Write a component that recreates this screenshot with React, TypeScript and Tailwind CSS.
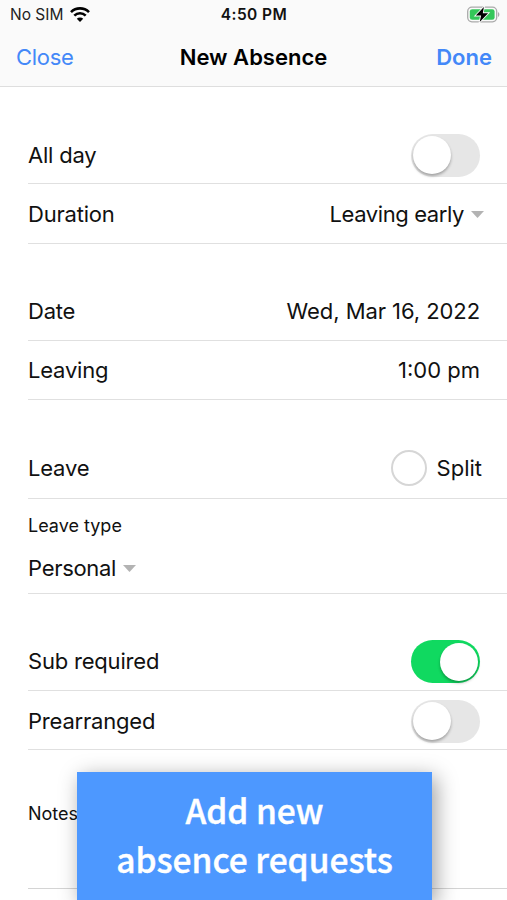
import type { ReactNode } from 'react';
import clsx from 'clsx';

interface RowProps {
  label: string;
  className?: string;
  children?: ReactNode;
}

function Row({ label, className, children }: RowProps) {
  return (
    <div className={clsx('flex items-center justify-between border-b border-[#e0e0e0]', className ?? 'h-[59.3px] pt-[2px]')}>
      <span className="tracking-[-0.2px]">{label}</span>
      {children}
    </div>
  );
}

function Toggle({ on = false }: { on?: boolean }) {
  return (
    <div
      className={clsx(
        'mr-[27px] flex h-[43px] w-[69px] items-center rounded-full px-[2px]',
        on ? 'justify-end bg-[#10d960]' : 'justify-start bg-[#e6e6e6]',
      )}
    >
      <div className="size-[38px] rounded-full bg-white shadow-[0_2px_3px_rgba(0,0,0,0.3)]" />
    </div>
  );
}

function Caret() {
  return (
    <svg width="13" height="7" viewBox="0 0 13 7" fill="#b3b3b3">
      <path d="M0 0h13L6.5 7z" />
    </svg>
  );
}

function WifiIcon() {
  return (
    <svg width="20" height="15" viewBox="0 0 20 15" fill="none" stroke="#000" strokeWidth="2.6" className="-mt-px">
      <path d="M1 5.1a12.8 12.8 0 0 1 18 0" />
      <path d="M4.3 8.6a8.1 8.1 0 0 1 11.4 0" />
      <path d="M10 15 6.8 11.8a4.6 4.6 0 0 1 6.4 0z" fill="#000" stroke="none" />
    </svg>
  );
}

function BatteryIcon() {
  return (
    <svg width="33" height="17" viewBox="0 0 33 17" className="-mt-[2px]">
      <rect x="0.7" y="1.2" width="29" height="14.6" rx="4.2" fill="none" stroke="#aaa" strokeWidth="1.3" />
      <rect x="2.8" y="3.2" width="24.8" height="10.6" rx="2.4" fill="#34c759" />
      <path d="M31 6v5c1.8-.8 1.8-4.2 0-5z" fill="#aaa" />
      <path d="M16.9 1 8.8 9.6h5.3L12.7 16l8.4-8.8h-5.3z" fill="#000" stroke="#fafafa" strokeWidth="1.8" paintOrder="stroke" />
    </svg>
  );
}

function Header() {
  return (
    <header className="h-[87px] border-b border-[#dedede] bg-[#fafafa]">
      <div className="grid h-[30px] grid-cols-3 items-center pr-[7px] pl-[10px] text-[15.5px]">
        <div className="flex items-center gap-[7px] text-[#222]">
          <span className="whitespace-nowrap">No SIM</span>
          <WifiIcon />
        </div>
        <span className="-ml-[2px] text-center font-semibold tracking-[0.4px] text-[#111]">4:50 PM</span>
        <div className="flex justify-end">
          <BatteryIcon />
        </div>
      </div>
      <div className="grid h-[55px] grid-cols-[100px_1fr_100px] items-center px-4 text-[22px]">
        <button className="text-left tracking-[-0.3px] text-[#4388f8]">Close</button>
        <h1 className="text-center font-semibold text-black">New Absence</h1>
        <button className="-mr-px text-right font-semibold text-[#4388f8]">Done</button>
      </div>
    </header>
  );
}

export default function App() {
  return (
    <div className="relative h-[900px] w-[507px] overflow-hidden bg-white font-['Inter',sans-serif] text-[22px] text-[#111]">
      <Header />

      <main className="pl-7">
        <section className="pt-[38px]">
          <Row label="All day">
            <Toggle />
          </Row>
          <Row label="Duration">
            <div className="mr-[23px] flex items-center gap-[7px]">
              <span className="tracking-[-0.4px]">Leaving early</span>
              <Caret />
            </div>
          </Row>
        </section>

        <section className="pt-[38px]">
          <Row label="Date">
            <span className="mr-[27px] tracking-[-0.07px]">Wed, Mar 16, 2022</span>
          </Row>
          <Row label="Leaving" className="h-[59.3px]">
            <span className="mr-[27px]">1:00 pm</span>
          </Row>
        </section>

        <section className="pt-[38px]">
          <Row label="Leave" className="h-[61px]">
            <div className="mr-6 flex items-center gap-[10px]">
              <span className="size-9 rounded-full border-2 border-[#d6d6d6]" />
              <span className="mr-px">Split</span>
            </div>
          </Row>
          <div className="flex h-[95px] flex-col border-b border-[#e0e0e0] pt-[13px]">
            <span className="text-[18px] leading-[27px]">Leave type</span>
            <div className="mt-[13px] flex items-center gap-[7px] leading-[32px]">
              <span className="tracking-[-0.3px]">Personal</span>
              <Caret />
            </div>
          </div>
        </section>

        <section className="pt-[38px]">
          <Row label="Sub required" className="h-[59.3px] pt-px">
            <Toggle on />
          </Row>
          <Row label="Prearranged" className="h-[59px] pt-[2px]">
            <Toggle />
          </Row>
        </section>

        <div className="h-[138.6px] border-b border-[#d4d4d4] pt-[50px] text-[18px] leading-[28px]">Notes</div>
      </main>

      <div className="absolute top-[772px] left-[77px] h-[128px] w-[355px] bg-[#4d98ff] pt-[13px] text-center font-['Noto_Sans_CJK_SC',sans-serif] text-[33.5px] leading-[49px] font-medium text-white shadow-[4px_5px_20px_rgba(0,0,0,0.38)] [-webkit-text-stroke:0.4px_white]">
        Add new
        <br />
        absence requests
      </div>
    </div>
  );
}
